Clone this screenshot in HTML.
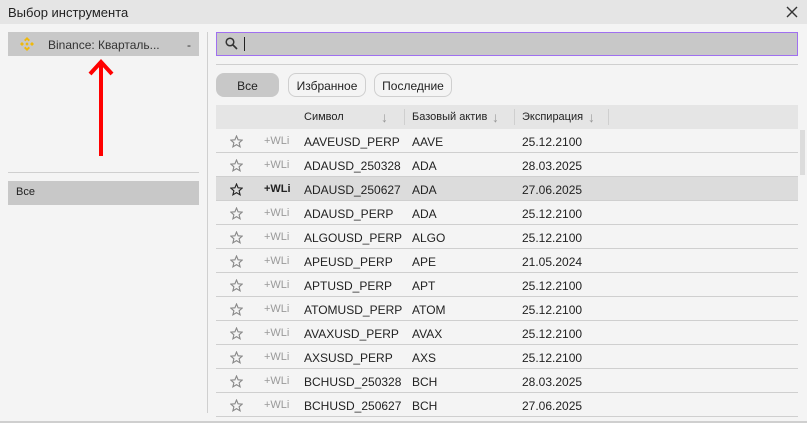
<!DOCTYPE html>
<html><head><meta charset="utf-8"><style>
*{margin:0;padding:0;box-sizing:border-box}
body{width:807px;height:423px;overflow:hidden;background:#f4f4f4;font-family:"Liberation Sans",Roboto,sans-serif;font-size:12px;color:#222;position:relative}
.abs{position:absolute}
.title{left:0;top:0;width:807px;height:24px;background:#e5e5e5;font-size:13px;padding:5px 8px;color:#222}
.row{position:absolute;left:216px;width:582px;height:24px;border-bottom:1px solid #cfcfcf}
.row span{position:absolute;top:6px}
.star{left:14px;width:13px;height:13px}
.wl{left:48px;font-size:11px;color:#999}
.ar{color:#999;font-size:14px}
</style></head><body>
<div class="abs title">Выбор инструмента</div>
<svg class="abs" style="left:786px;top:6px" width="12" height="12" viewBox="0 0 12 12"><path d="M1 1L11 11M11 1L1 11" stroke="#333" stroke-width="1.4"/></svg>
<div class="abs" style="left:8px;top:32px;width:191px;height:24px;background:#c8c8c8"></div>
<svg class="abs" style="left:19px;top:36px" width="16" height="16" viewBox="0 0 16 16"><g fill="#f0b90b"><path d="M8 1L11 4L9.6 5.4L8 3.8L6.4 5.4L5 4Z"/><path d="M8 15L11 12L9.6 10.6L8 12.2L6.4 10.6L5 12Z"/><path d="M1 8L3 6L5 8L3 10Z"/><path d="M15 8L13 6L11 8L13 10Z"/><path d="M8 6.3L9.7 8L8 9.7L6.3 8Z"/></g></svg>
<div class="abs" style="left:48px;top:38px;font-size:12px;color:#333">Binance: Кварталь...</div>
<div class="abs" style="left:187px;top:38px;color:#333">-</div>
<svg class="abs" style="left:86px;top:58px" width="30" height="100" viewBox="0 0 30 100"><path d="M15 4V98" stroke="#f00" stroke-width="4"/><path d="M4 16L15 4L26 16" stroke="#f00" stroke-width="4" fill="none"/></svg>
<div class="abs" style="left:8px;top:172px;width:191px;height:1px;background:#cfcfcf"></div>
<div class="abs" style="left:8px;top:181px;width:191px;height:24px;background:#c8c8c8;padding:5px 8px;font-size:11px">Все</div>
<div class="abs" style="left:207px;top:32px;width:1px;height:381px;background:#cfcfcf"></div>
<div class="abs" style="left:216px;top:32px;width:582px;height:24px;background:#c8c8c8;border:1px solid #a070f0"></div>
<svg class="abs" style="left:225px;top:37px" width="13" height="13" viewBox="0 0 13 13"><circle cx="5" cy="5" r="3.8" stroke="#333" stroke-width="1.5" fill="none"/><path d="M8 8L12 12" stroke="#333" stroke-width="1.6"/></svg>
<div class="abs" style="left:244px;top:37px;width:1px;height:14px;background:#222"></div>
<div class="abs" style="left:216px;top:64px;width:582px;height:1px;background:#cfcfcf"></div>
<div class="abs" style="left:216px;top:73px;width:63px;height:24px;background:#c8c8c8;border-radius:8px;text-align:center;padding-top:6px">Все</div>
<div class="abs" style="left:288px;top:73px;width:78px;height:24px;border:1px solid #cfcfcf;border-radius:8px;text-align:center;padding-top:5px">Избранное</div>
<div class="abs" style="left:374px;top:73px;width:78px;height:24px;border:1px solid #cfcfcf;border-radius:8px;text-align:center;padding-top:5px">Последние</div>
<div class="abs" style="left:216px;top:105px;width:582px;height:24px;background:#e5e5e5;font-size:11px">
<span class="abs" style="left:88px;top:6px">Символ</span><span class="abs ar" style="left:165px;top:4px">↓</span>
<div class="abs" style="left:188px;top:4px;width:1px;height:16px;background:#cfcfcf"></div>
<span class="abs" style="left:196px;top:6px">Базовый актив</span><span class="abs ar" style="left:276px;top:4px">↓</span>
<div class="abs" style="left:298px;top:4px;width:1px;height:16px;background:#cfcfcf"></div>
<span class="abs" style="left:306px;top:6px">Экспирация</span><span class="abs ar" style="left:372px;top:4px">↓</span>
<div class="abs" style="left:392px;top:4px;width:1px;height:16px;background:#cfcfcf"></div>
</div>
<div class="abs" style="left:800px;top:130px;width:5px;height:45px;background:#dcdcdc"></div>
<svg width="0" height="0" style="position:absolute"><defs><path id="st" d="M6.5 1L8.1 4.8L12.2 5.1L9.1 7.8L10.1 11.8L6.5 9.6L2.9 11.8L3.9 7.8L0.8 5.1L4.9 4.8Z"/></defs></svg>
<div id="rows"></div>
<script>
var d=[["AAVEUSD_PERP","AAVE","25.12.2100"],["ADAUSD_250328","ADA","28.03.2025"],["ADAUSD_250627","ADA","27.06.2025"],["ADAUSD_PERP","ADA","25.12.2100"],["ALGOUSD_PERP","ALGO","25.12.2100"],["APEUSD_PERP","APE","21.05.2024"],["APTUSD_PERP","APT","25.12.2100"],["ATOMUSD_PERP","ATOM","25.12.2100"],["AVAXUSD_PERP","AVAX","25.12.2100"],["AXSUSD_PERP","AXS","25.12.2100"],["BCHUSD_250328","BCH","28.03.2025"],["BCHUSD_250627","BCH","27.06.2025"]];
var h="";d.forEach(function(r,i){var sel=i==2;
h+='<div class="row" style="top:'+(129+i*24)+'px;'+(sel?'background:#dcdcdc':'')+'"><svg class="abs star" style="left:14px;top:6px" viewBox="0 0 13 13"><use href="#st" fill="none" stroke="'+(sel?'#222':'#888')+'" stroke-width="1.1"/></svg><span class="wl" style="'+(sel?'color:#222;font-weight:bold':'')+'">+WLi</span><span style="left:88px">'+r[0]+'</span><span style="left:196px">'+r[1]+'</span><span style="left:306px">'+r[2]+'</span></div>';});
document.getElementById("rows").innerHTML=h;
</script>
<div class="abs" style="left:0;top:421px;width:807px;height:2px;background:#cfcfcf"></div>
</body></html>
